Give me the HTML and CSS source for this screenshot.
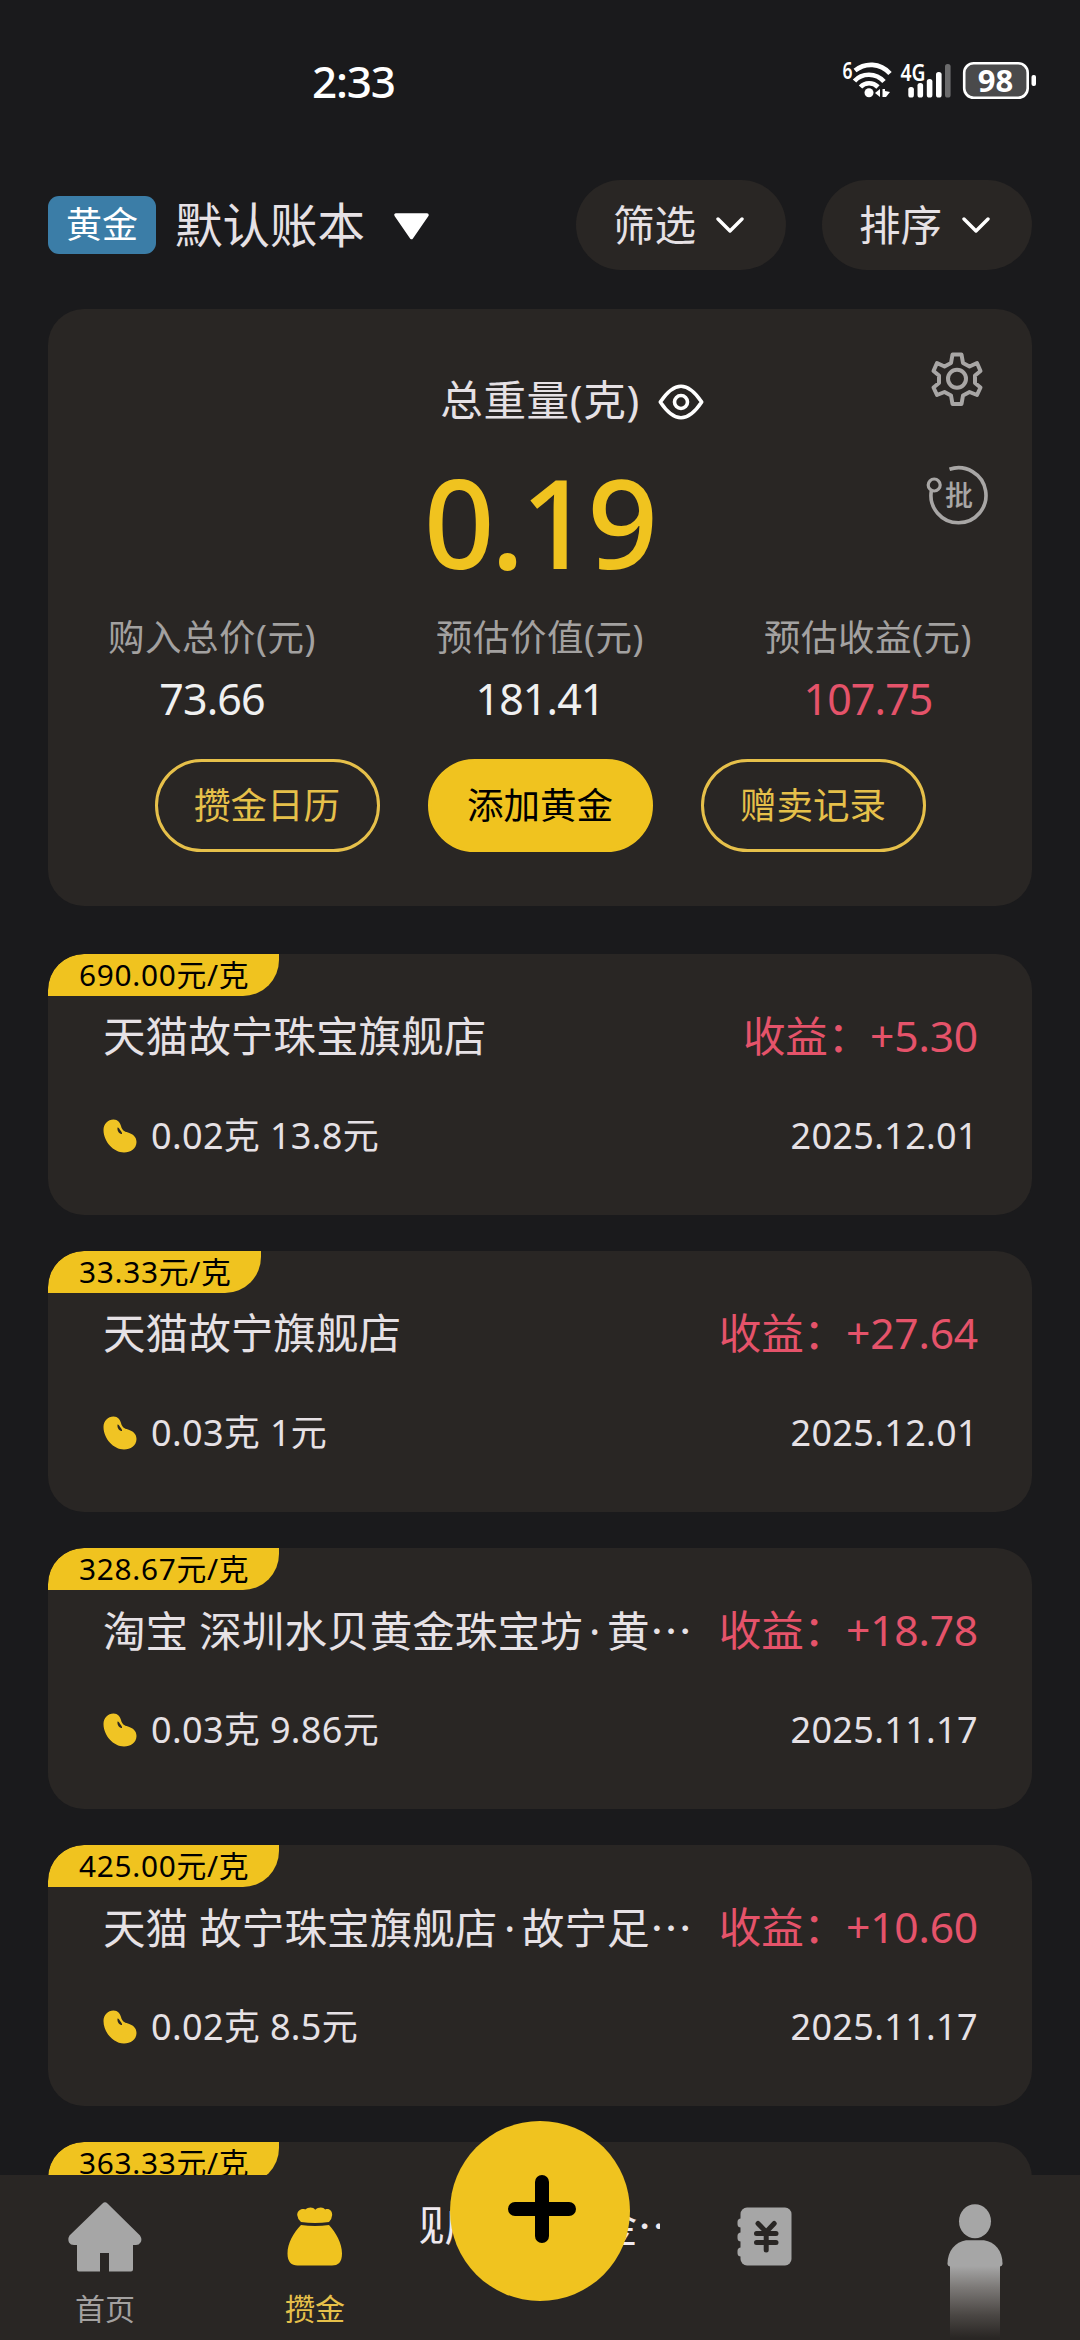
FILE: index.html
```html
<!DOCTYPE html>
<html lang="zh-CN">
<head>
<meta charset="utf-8">
<title>攒金</title>
<link rel="stylesheet" href="styles.css">
</head>
<body>
<svg class="defs" width="0" height="0">
  <symbol id="bean" viewBox="0 0 34 34">
    <path fill="#f0c424" d="M.5 11C.5 5 5 .5 10.500 .5c4.500 0 6.500 3 7.500 6.500 1 4 3 5.500 7 6.500 5 1.500 8.500 4.500 8.500 9.500 0 6.500-6 10.500-12.500 10.500C10.500 33.500 .5 22.500 .5 11z"/>
    <path fill="#2b2724" d="M14.500 8.500c1.500 0 2 1.500 3 3s2 2.500 1.500 3.500c-2.500 0-5-2.500-4.500-6.500z"/>
  </symbol>
  <symbol id="chev" viewBox="0 0 28 18">
    <path d="M2 3l12 12L26 3" fill="none" stroke="#fff" stroke-width="3.400" stroke-linecap="round" stroke-linejoin="round"/>
  </symbol>
</svg>

<div class="screen">
  <div class="status">
    <span class="time">2:33</span>
    <svg class="signals" width="204" height="64" viewBox="836 48 204 64">
      <text x="842.500" y="79" class="s-small" textLength="10" lengthAdjust="spacingAndGlyphs">6</text>
      <g fill="none" stroke="#fff" stroke-width="4.600" stroke-linecap="butt">
        <path d="M855 70.500C865 62.500 880 62.500 890 73.500"/>
        <path d="M854.500 81C862 72.500 876 72.500 884 81.500"/>
        <path d="M860.500 87C865 82 873 82 878 87"/>
      </g>
      <circle cx="869" cy="92.800" r="4.500" fill="#fff"/>
      <path d="M875 93l5-4v8zM882.500 89h2.500v2l5 1-4 5h-3.500z" fill="#fff"/>
      <text x="900.500" y="81" class="s-small" textLength="25" lengthAdjust="spacingAndGlyphs">4G</text>
      <g fill="#fff">
        <rect x="908.300" y="87" width="5.600" height="10.500" rx="2.600"/>
        <rect x="917.500" y="83" width="5.600" height="14.500" rx="2.600"/>
        <rect x="926.800" y="79" width="5.600" height="18.500" rx="2.600"/>
        <rect x="936" y="72" width="5.600" height="25.500" rx="2.600"/>
        <rect x="945" y="64" width="5.600" height="33.500" rx="2.600" fill="#6b6b6c"/>
      </g>
      <rect x="964.200" y="63.200" width="63.500" height="34.600" rx="9.500" fill="#4a4a4b" stroke="#fff" stroke-width="2.600"/>
      <rect x="1031.500" y="75" width="4.500" height="11" rx="2" fill="#fff"/>
      <text x="995.500" y="92" class="s-batt" text-anchor="middle">98</text>
    </svg>
  </div>

  <header class="head">
    <span class="kind">黄金</span>
    <span class="book">默认账本</span>
    <svg class="tri" width="37" height="27" viewBox="0 0 37 27"><path d="M3 2h31L18.500 24.500z" fill="#fff" stroke="#fff" stroke-width="3.500" stroke-linejoin="round"/></svg>
    <button class="pill first"><span>筛选</span><svg width="28" height="18"><use href="#chev"/></svg></button>
    <button class="pill"><span>排序</span><svg width="28" height="18"><use href="#chev"/></svg></button>
  </header>

  <section class="summary">
    <div class="tools">
      <svg width="58" height="56" viewBox="928 351.500 58 56" fill="none" stroke="#a8a6a5" stroke-width="4" stroke-linejoin="round">
        <path d="M952.500 355h9l1.500 8.500 6.500 3.500 7.500-3.500 3.500 8-5.500 4.500v7.500l5.500 4.500-3.500 7.500-7.500-3-6.500 3.500-1.500 8.500h-9l-1.500-8.500-6.500-3.500-7.500 3-3.500-7.500 5.500-4.500v-7.500l-5.500-4.500 3.500-8 7.500 3.500 6.500-3.500z"/>
        <circle cx="957" cy="379.200" r="9"/>
      </svg>
      <svg width="64" height="62" viewBox="925 464 64 62">
        <path d="M949.500 469.300A27.500 27.500 0 1 1 931.300 491" fill="none" stroke="#a8a6a5" stroke-width="3.600"/>
        <circle cx="934.200" cy="485" r="6" fill="none" stroke="#a8a6a5" stroke-width="3.200"/>
        <text x="945" y="505.500" class="batch">批</text>
      </svg>
    </div>
    <div class="total-label"><span>总重量(克)</span>
      <svg width="46" height="36" viewBox="0 0 46 36" fill="none" stroke="#fff" stroke-width="3.600"><path d="M2.300 18C9 8 15 2.200 23 2.200S37 8 43.700 18C37 28 31 33.800 23 33.800S9 28 2.300 18z" stroke-linejoin="round"/><circle cx="23" cy="18" r="6.500"/></svg>
    </div>
    <div class="total">0.19</div>
    <div class="stats">
      <div class="stat"><span class="k">购入总价(元)</span><span class="v">73.66</span></div>
      <div class="stat"><span class="k">预估价值(元)</span><span class="v">181.41</span></div>
      <div class="stat"><span class="k">预估收益(元)</span><span class="v gain">107.75</span></div>
    </div>
    <div class="actions">
      <button class="act">攒金日历</button>
      <button class="act solid">添加黄金</button>
      <button class="act">赠卖记录</button>
    </div>
  </section>

  <main class="list">
    <article class="item">
      <span class="tag">690.00元/克</span>
      <div class="line top"><span class="name">天猫故宁珠宝旗舰店</span><span class="profit">收益：+5.30</span></div>
      <div class="line sub"><svg class="bean" width="34" height="34"><use href="#bean"/></svg><span>0.02克 13.8元</span><time>2025.12.01</time></div>
    </article>
    <article class="item">
      <span class="tag">33.33元/克</span>
      <div class="line top"><span class="name">天猫故宁旗舰店</span><span class="profit">收益：+27.64</span></div>
      <div class="line sub"><svg class="bean" width="34" height="34"><use href="#bean"/></svg><span>0.03克 1元</span><time>2025.12.01</time></div>
    </article>
    <article class="item">
      <span class="tag">328.67元/克</span>
      <div class="line top"><span class="name">淘宝 深圳水贝黄金珠宝坊<span class="mid">·</span>黄<span class="dots">…</span></span><span class="profit">收益：+18.78</span></div>
      <div class="line sub"><svg class="bean" width="34" height="34"><use href="#bean"/></svg><span>0.03克 9.86元</span><time>2025.11.17</time></div>
    </article>
    <article class="item">
      <span class="tag">425.00元/克</span>
      <div class="line top"><span class="name">天猫 故宁珠宝旗舰店<span class="mid">·</span>故宁足<span class="dots">…</span></span><span class="profit">收益：+10.60</span></div>
      <div class="line sub"><svg class="bean" width="34" height="34"><use href="#bean"/></svg><span>0.02克 8.5元</span><time>2025.11.17</time></div>
    </article>
    <article class="item">
      <span class="tag">363.33元/克</span>
    </article>
  </main>

  <nav class="nav">
    <a class="tab">
      <svg width="74" height="70" viewBox="68 2202 74 70" fill="#a6a6a6"><path d="M102.500 2203.500q2.500-2.600 5 0L140 2235.500q2.500 4 .5 7-1.500 2.500-4.500 2.500h-3v24.500q0 2-2 2h-22v-18.500h-9v18.500H79q-2 0-2-2V2245h-3q-3.500 0-5-2.500-1.500-3.500.5-7z"/></svg>
      <span>首页</span>
    </a>
    <a class="tab on">
      <svg width="56" height="60" viewBox="287 2207.500 56 60" fill="#f0c31f"><path d="M301 2222.500q-3.500-3-3.800-7c0-4 4-7 8-5.500 3-2.800 8-2.800 10 .3 3-3 8-3.200 10-.3 4-1.500 7 1.500 7 5.500q-.3 4-3.200 7-14 2-28 0z"/><path d="M301 2225.500q14 2.200 28 0c7 8 13 18 13 28.500 0 9-4 12-10 12h-34.500c-6 0-10-3.500-10-12 0-10.500 6-20.500 13.500-28.500z"/></svg>
      <span>攒金</span>
    </a>
    <div class="slot"><span class="peek-l">舰店</span><span class="peek-r">金<span class="dots">…</span></span></div>
    <a class="tab icon-only">
      <svg width="56" height="60" viewBox="737.500 2207.500 56 60"><rect x="741" y="2208" width="51" height="58" rx="6.500" fill="#a6a6a6"/><g fill="#a6a6a6"><rect x="738" y="2219" width="8" height="9" rx="3.500"/><rect x="738" y="2233" width="8" height="9" rx="3.500"/><rect x="738" y="2248" width="8" height="9" rx="3.500"/></g><path d="M758.500 2224l8.200 8.500 8-8.500M757 2234h19.500M757 2243h19.500M766.700 2233v17.500" fill="none" stroke="#292624" stroke-width="5" stroke-linecap="round"/></svg>
    </a>
    <a class="tab icon-only">
      <svg width="56" height="63" viewBox="947 2204.500 56 63" fill="#a6a6a6"><ellipse cx="975" cy="2221.800" rx="16" ry="17"/><path d="M966 2240.800h18c11 1.500 18.500 11 18.500 23q0 3.200-3 3.200h-49q-3 0-3-3.200c0-12 8-21.500 18.500-23z"/></svg>
      <span class="fade"></span>
    </a>
    <button class="fab"><svg width="70" height="70" viewBox="0 0 70 70"><path d="M35 8v54M8 35h54" stroke="#000" stroke-width="14" stroke-linecap="round"/></svg></button>
  </nav>
</div>
</body>
</html>
```

FILE: styles.css
```css
* { box-sizing: border-box; }
body {
  margin: 0;
  background: #1a1a1c;
  color: #e6e1e5;
  font-family: "Noto Sans", "Noto Sans CJK SC", sans-serif;
}
button { font: inherit; color: inherit; border: 0; padding: 0; background: none; }
.defs { position: absolute; }
svg { display: block; flex: none; }

.screen {
  position: relative;
  width: 1080px;
  height: 2340px;
  overflow: hidden;
  display: flex;
  flex-direction: column;
}

.status {
  height: 180px;
  flex: none;
  display: flex;
  justify-content: space-between;
  align-items: flex-start;
  padding: 48px 40px 0 312px;
}
.time { margin-top: 10px; font-size: 44px; line-height: 46px; font-weight: 500; color: #fff; letter-spacing: -1.2px; }
.s-small { font-size: 23px; font-weight: 600; fill: #fff; }
.s-batt { font-size: 31px; font-weight: 700; fill: #fff; }

.head {
  height: 90px;
  flex: none;
  display: flex;
  align-items: center;
  padding: 0 48px;
}
.kind {
  width: 108px;
  height: 58px;
  line-height: 57px;
  border-radius: 11px;
  background: #3b7da7;
  color: #fff;
  font-size: 36px;
  text-align: center;
}
.book { font-size: 47.500px; line-height: 60px; margin-left: 19px; }
.tri { margin-left: 28px; margin-top: 2px; }
.pill {
  width: 210px;
  height: 90px;
  border-radius: 45px;
  background: #292624;
  display: flex;
  align-items: center;
  padding-left: 37px;
  gap: 20px;
  font-size: 41.500px;
  line-height: 60px;
}
.pill.first { margin-left: auto; margin-right: 36px; }

.summary {
  position: relative;
  flex: none;
  height: 597px;
  margin: 39px 48px 48px;
  border-radius: 36px;
  background: #292624;
  padding-top: 62px;
}
.tools {
  position: absolute;
  top: 42px;
  right: 43px;
  display: flex;
  flex-direction: column;
  align-items: center;
  gap: 57px;
}
.batch { font-family: "Noto Sans CJK SC", sans-serif; font-size: 28px; font-weight: 500; fill: #a8a6a5; }
.total-label {
  display: flex;
  justify-content: center;
  align-items: center;
  gap: 18px;
  height: 62px;
  padding-left: 64px;
  font-size: 42.600px;
  letter-spacing: 0.6px;
}
.total-label span { line-height: 62px; padding-bottom: 6px; }
.total {
  height: 150px;
  margin-top: 13px;
  padding-left: 0;
  font-size: 124px;
  line-height: 149px;
  font-weight: 500;
  letter-spacing: -4px;
  text-indent: -2px;
  text-align: center;
  color: #f0c31f;
}
.stats { display: grid; grid-template-columns: repeat(3, 1fr); padding: 14px 0 0; }
.stat { display: flex; flex-direction: column; align-items: center; }
.k { font-size: 36.500px; line-height: 54px; margin-bottom: 2px; letter-spacing: 0.5px; color: #a3a1a0; }
.v { font-size: 43px; line-height: 66px; letter-spacing: -0.9px; color: #f0f0f0; }
.v.gain { color: #e5536a; }
.actions { display: flex; justify-content: center; gap: 48px; margin-top: 27px; }
.act {
  width: 225px;
  height: 93px;
  border: 3px solid #e6c04a;
  border-radius: 47px;
  color: #e6c04a;
  font-size: 36.500px;
  line-height: 85px;
}
.act.solid { background: #f0c31f; border-color: #f0c31f; color: #000; }

.list { display: flex; flex-direction: column; gap: 36px; padding: 0 48px; flex: none; }
.item {
  height: 261px;
  border-radius: 36px;
  background: #292624;
  overflow: hidden;
}
.tag {
  display: block;
  width: fit-content;
  height: 42px;
  padding: 0 30px 0 31px;
  border-radius: 36px 0 36px 0;
  background: #f0c31f;
  color: #000;
  font-size: 29.800px;
  line-height: 42px;
  letter-spacing: 0.7px;
}
.line { display: flex; align-items: center; padding: 0 54px 0 55px; }
.top { height: 60px; margin-top: 9px; justify-content: space-between; font-size: 42.600px; line-height: 60px; white-space: nowrap; }
.mid { margin: 0 6.500px; }
.dots { font-family: "Noto Sans CJK SC", sans-serif; }
.profit { color: #e5536a; letter-spacing: -0.2px; }
.sub { height: 50px; margin-top: 46px; font-size: 36px; line-height: 50px; letter-spacing: 0.35px; }
.bean { margin-right: 14px; }
.sub time { margin-left: auto; }

.nav {
  position: absolute;
  left: 0;
  bottom: 0;
  width: 1080px;
  height: 165px;
  display: grid;
  grid-template-columns: 210px 210px 240px 210px 210px;
  background: #292624;
}
.tab {
  display: flex;
  flex-direction: column;
  align-items: center;
  padding-top: 27px;
  color: #a3a1a0;
  font-size: 30px;
  line-height: 40px;
}
.tab span { margin-top: 17px; }
.tab.on { padding-top: 32px; color: #e6c04a; }
.tab.on span { margin-top: 22px; }
.tab.icon-only { padding-top: 32px; }
.tab.icon-only:last-of-type { padding-top: 29px; }
.tab .fade { width: 50px; height: 72px; margin-top: -1px; background: linear-gradient(#a6a6a6, #7c7977 30%, #4b4744 68%, #292624); }
.slot {
  overflow: hidden;
  height: 98px;
  display: flex;
  justify-content: space-between;
  color: #efe9ee;
  font-size: 42.600px;
  line-height: 98px;
  white-space: nowrap;
}
.peek-l { margin-left: -18px; }
.peek-r { margin-right: -20px; }
.fab {
  position: absolute;
  left: 450px;
  top: -54px;
  width: 180px;
  height: 180px;
  border-radius: 50%;
  background: #f0c31f;
  display: flex;
  align-items: center;
  justify-content: center;
  padding: 0 0 4px 4px;
}
```
